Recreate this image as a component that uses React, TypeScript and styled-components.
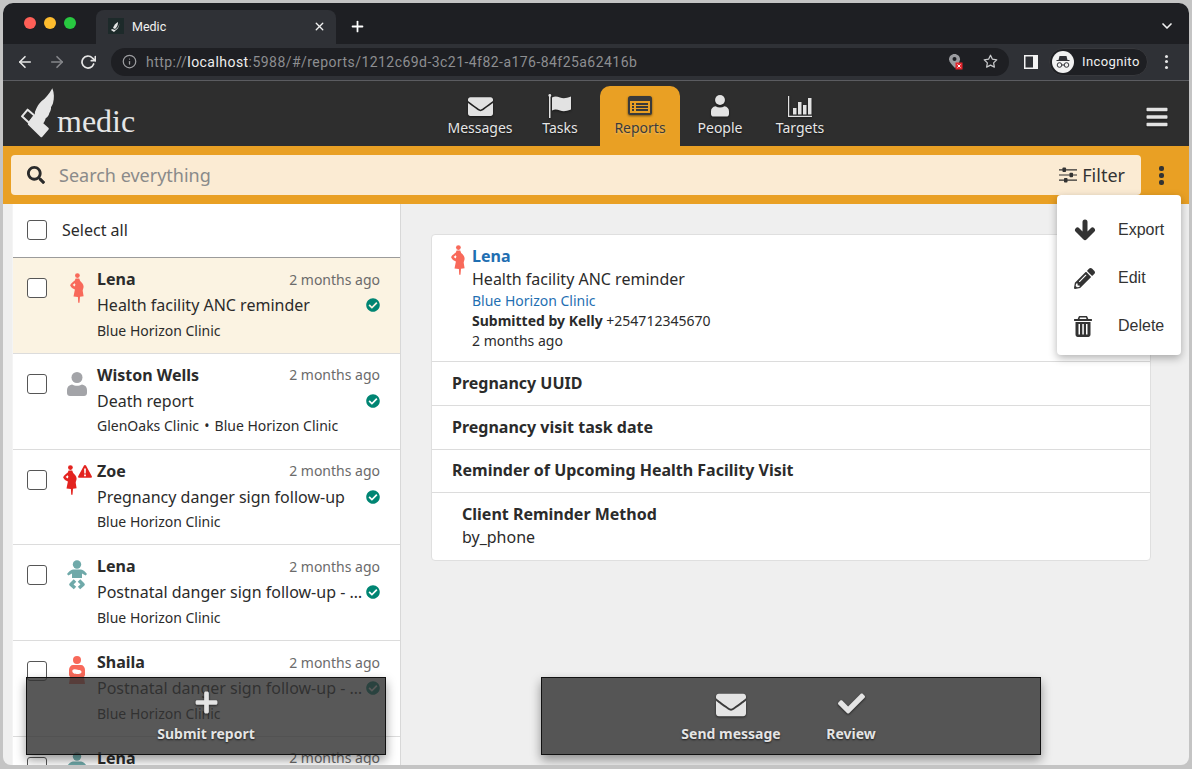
import React from 'react'
import styled, { createGlobalStyle } from 'styled-components'
import { FaBars, FaCheck, FaCheckCircle, FaEnvelope, FaPencilAlt, FaPlus, FaSearch } from 'react-icons/fa'
import { FiArrowLeft, FiArrowRight, FiChevronDown, FiInfo, FiPlus, FiRotateCw, FiStar, FiX } from 'react-icons/fi'

const GlobalStyle = createGlobalStyle`
  html, body {
    margin: 0;
    padding: 0;
    height: 100%;
    overflow: hidden;
    background: #c4c4c4;
  }
  * { box-sizing: border-box; }
`

const Screen = styled.div`
  width: 1192px;
  height: 769px;
  padding: 3px 3px 4px 3px;
  font-family: 'Noto Sans', sans-serif;
  color: #2b2b2b;
`

const Win = styled.div`
  position: relative;
  width: 100%;
  height: 100%;
  display: flex;
  flex-direction: column;
  overflow: hidden;
  border-radius: 10px 10px 8px 8px;
  background: #efefef;
`

/* browser chrome */
const TabStrip = styled.div`
  height: 41px;
  flex: none;
  display: flex;
  align-items: flex-end;
  background: #1e1f23;
  padding-left: 21px;
  color: #f1f1f1;
`

const Lights = styled.div`
  display: flex;
  gap: 8px;
  align-self: center;
  margin: 0 20px 1px 0;
`

const Light = styled.span<{ $c: string }>`
  width: 12px;
  height: 12px;
  border-radius: 50%;
  background: ${(p) => p.$c};
`

const ChromeTab = styled.div`
  width: 240px;
  height: 34px;
  padding: 0 10px 2px 12px;
  display: flex;
  align-items: center;
  gap: 8px;
  background: #2f3136;
  border-radius: 8px 8px 0 0;
  font: 12.5px Roboto, sans-serif;
`

const Favicon = styled.span`
  width: 16px;
  height: 16px;
  display: flex;
  align-items: center;
  justify-content: center;
  background: #1d2a2a;
`

const TabTitle = styled.span`
  flex: 1;
`

const StripEnd = styled.div`
  flex: 1;
  height: 34px;
  display: flex;
  align-items: center;
  justify-content: space-between;
  padding: 0 14px 2px 13px;
`

const ChromeBar = styled.div`
  height: 37px;
  flex: none;
  display: flex;
  align-items: center;
  padding: 0 0 1px 13px;
  background: #2f3136;
  border-bottom: 1px solid #5b5c60;
  color: #e6e6e6;
`

const NavArrows = styled.div`
  display: flex;
  align-items: center;
  gap: 14px;
  width: 95px;
`

const Address = styled.div`
  width: 898px;
  height: 28px;
  display: flex;
  align-items: center;
  padding: 0 11px;
  border-radius: 14px;
  background: #1e1f23;
  font: 14px Roboto, sans-serif;
  letter-spacing: 0.45px;
  color: #8d8e91;
`

const Url = styled.span`
  flex: 1;
  margin-left: 9px;
  b {
    font-weight: 400;
    color: #eeeeee;
  }
`

const Blocked = styled.span`
  width: 34px;
  display: flex;
`

const SidePanelWrap = styled.span`
  margin-left: 15px;
  display: flex;
`

const Incognito = styled.div`
  width: 99px;
  height: 28px;
  margin-left: 11px;
  display: flex;
  align-items: center;
  gap: 8px;
  padding-left: 2px;
  border-radius: 14px;
  background: #1e1f23;
  border: 1px solid #37383c;
  font: 13px Roboto, sans-serif;
  letter-spacing: 0.4px;
  color: #f0f0f0;
`

const ToolbarEnd = styled.span`
  margin-left: 17px;
  display: flex;
`

const Kebab = styled.span<{ $size: number; $color: string; $gap: number; $round?: boolean }>`
  display: flex;
  flex-direction: column;
  align-items: center;
  gap: ${(p) => p.$gap}px;
  i {
    width: ${(p) => p.$size}px;
    height: ${(p) => p.$size}px;
    border-radius: ${(p) => (p.$round ? '50%' : '2px')};
    background: ${(p) => p.$color};
  }
`

/* app header */
const Header = styled.header`
  height: 65px;
  flex: none;
  display: flex;
  background: #2e2e2e;
  color: #e2e2e2;
`

const Logo = styled.div`
  width: 437px;
  display: flex;
  align-items: flex-end;
  padding: 0 0 7px 12px;
`

const LogoText = styled.span`
  font: 400 32px 'Liberation Serif', serif;
  line-height: 32px;
  margin: 0 0 2px 2px;
  color: #e6e6e6;
`

const NavTabs = styled.nav`
  display: flex;
  flex: 1;
  align-items: flex-end;
`

const NavTab = styled.div<{ $active?: boolean }>`
  width: 80px;
  height: 60px;
  display: flex;
  flex-direction: column;
  align-items: center;
  justify-content: flex-end;
  padding-bottom: 8px;
  font-size: 14px;
  line-height: 20px;
  border-radius: 10px 10px 0 0;
  text-shadow: 0 1px 2px rgba(0, 0, 0, 0.6);
  background: ${(p) => (p.$active ? '#e9a024' : 'transparent')};
  color: ${(p) => (p.$active ? '#3a3a3a' : '#e6e6e6')};
  ${(p) => p.$active && 'text-shadow: 0 1px 2px rgba(255, 255, 255, 0.35);'}
`

const NavIcon = styled.span`
  height: 24px;
  display: flex;
  align-items: center;
  filter: drop-shadow(0 1px 1px rgba(0, 0, 0, 0.5));
`

const Burger = styled.div`
  width: 65px;
  display: flex;
  align-items: center;
  justify-content: center;
  padding-top: 6px;
  filter: drop-shadow(0 1px 1px rgba(0, 0, 0, 0.5));
`

/* search */
const SearchBand = styled.div`
  height: 58px;
  flex: none;
  display: flex;
  align-items: center;
  padding: 0 0 0 8px;
  background: #e9a024;
`

const SearchBox = styled.div`
  width: 1130px;
  height: 40px;
  display: flex;
  align-items: center;
  padding: 0 16px;
  border-radius: 4px;
  background: #fbebd3;
  font-size: 18px;
`

const Placeholder = styled.span`
  flex: 1;
  margin-left: 14px;
  color: #8a8a8a;
`

const FilterLabel = styled.span`
  margin-left: 5px;
  color: #333333;
`

const BandMenu = styled.div`
  flex: 1;
  display: flex;
  justify-content: center;
  padding-right: 8px;
`

/* body */
const Main = styled.main`
  flex: 1;
  min-height: 0;
  display: flex;
  padding-left: 9px;
`

const ListPane = styled.section`
  width: 389px;
  flex: none;
  overflow: hidden;
  background: #ffffff;
  border-right: 1px solid #d8d8d8;
  border-left: 1px solid #f4f4f4;
`

const SelectAll = styled.div`
  height: 54px;
  display: flex;
  align-items: center;
  gap: 15px;
  padding: 0 0 2px 14px;
  font-size: 16px;
  border-bottom: 1px solid #9b9b9b;
`

const Box = styled.span`
  display: block;
  width: 20px;
  height: 20px;
  flex: none;
  border: 1px solid #565656;
  border-radius: 3px;
  background: #ffffff;
`

const Item = styled.article<{ $selected?: boolean }>`
  height: 95.8px;
  display: flex;
  padding: 8px 20px 0 14px;
  border-bottom: 1px solid #dcdcdc;
  background: ${(p) => (p.$selected ? '#fbf3e2' : '#ffffff')};
`

const ItemBox = styled.div`
  padding-top: 12px;
  width: 20px;
  flex: none;
`

const ItemIcon = styled.div<{ $top: number }>`
  width: 50px;
  flex: none;
  display: flex;
  align-items: flex-start;
  justify-content: center;
  gap: 1px;
  padding: ${(p) => p.$top}px 0 0 10px;
`

const ItemBody = styled.div`
  flex: 1;
  min-width: 0;
`

const ItemLine = styled.div`
  height: 26px;
  display: flex;
  align-items: center;
  justify-content: space-between;
  svg {
    flex: none;
  }
`

const Name = styled.span`
  font-size: 16px;
  font-weight: 700;
`

const When = styled.span`
  font-size: 14px;
  color: #6b6b6b;
`

const Subject = styled.span`
  font-size: 16px;
  max-width: 268px;
  white-space: nowrap;
  overflow: hidden;
  text-overflow: ellipsis;
`

const Place = styled.span`
  font-size: 14px;
  padding-bottom: 2px;
`

const Dot = styled.span`
  margin: 0 1.5px;
`

const DetailPane = styled.section`
  flex: 1;
  padding: 30px 38px 0 30px;
`

const Card = styled.div`
  background: #ffffff;
  border: 1px solid #dfdfdf;
  border-radius: 4px;
`

const CardHead = styled.div`
  height: 127px;
  display: flex;
  padding: 10px 19px;
  border-bottom: 1px solid #dcdcdc;
`

const HeadIcon = styled.div`
  width: 21px;
  flex: none;
`

const HeadLine = styled.div<{ $size: number; $h: number; $blue?: boolean; $bold?: boolean }>`
  font-size: ${(p) => p.$size}px;
  line-height: ${(p) => p.$h}px;
  font-weight: ${(p) => (p.$bold ? 700 : 400)};
  color: ${(p) => (p.$blue ? '#1f6fb2' : '#2b2b2b')};
  strong {
    font-weight: 700;
  }
`

const Field = styled.div<{ $nested?: boolean; $tight?: boolean; $h: number }>`
  height: ${(p) => p.$h}px;
  padding: ${(p) => (p.$nested ? '9px 30px 11px' : p.$tight ? '0 20px 2px' : '0 20px')};
  display: flex;
  flex-direction: column;
  justify-content: center;
  font-size: 16px;
  line-height: 23px;
  border-bottom: ${(p) => (p.$nested ? 'none' : '1px solid #dcdcdc')};
  b {
    font-weight: 700;
  }
`

/* overlays */
const Menu = styled.div`
  position: absolute;
  top: 192px;
  left: 1054px;
  width: 124px;
  height: 160px;
  padding: 11px 0 9px;
  background: #ffffff;
  border-radius: 4px;
  box-shadow: 0 3px 8px rgba(0, 0, 0, 0.3);
`

const MenuRow = styled.div`
  height: 48px;
  display: flex;
  align-items: center;
  padding-left: 17px;
  font: 16px 'Liberation Sans', sans-serif;
  color: #333333;
`

const MenuGlyph = styled.span`
  width: 44px;
  display: flex;
  color: #333333;
`

const ActionBar = styled.div<{ $left: number; $width: number }>`
  position: absolute;
  top: 674px;
  left: ${(p) => p.$left}px;
  width: ${(p) => p.$width}px;
  height: 78px;
  display: flex;
  justify-content: center;
  background: rgba(51, 51, 51, 0.82);
  border: 1px solid #111111;
  box-shadow: 0 5px 10px rgba(0, 0, 0, 0.4);
`

const Action = styled.div`
  width: 120px;
  display: flex;
  flex-direction: column;
  align-items: center;
  padding-top: 12px;
  color: #e4e4e4;
  font-size: 14px;
  font-weight: 700;
  line-height: 20px;
  text-shadow: 0 1px 2px rgba(0, 0, 0, 0.7);
`

const ActionIcon = styled.span`
  height: 34px;
  display: flex;
  align-items: flex-start;
  filter: drop-shadow(0 1px 1px rgba(0, 0, 0, 0.6));
`

const Wing = () => (
  <svg width="40" height="54" viewBox="0 0 120 162" fill="#e6e6e6" aria-hidden="true">
    <path d="M112 10c6 15 6 30 2 45-2 5-4 10-6 11 1 6-2 14-5 18-1 6-5 12-11 16-2 8-6 16-12 20L58 98l2-18c6-15 12-25 20-32 10-6 22-20 32-38z" />
    <path d="M57 90l43 38c2 2 2 4 0 6l-18 21c-2 2-4 2-6 0L40 120c-2-2-2-4 0-6l11-17z" />
    <path d="M38 74l21 18-17 21-21-19z" fill="none" stroke="#e6e6e6" strokeWidth="6" strokeLinejoin="round" />
  </svg>
)

const Pregnant = ({ color }: { color: string }) => (
  <svg width="14" height="30" viewBox="0 0 14 30" fill={color} aria-hidden="true">
    <circle cx="7.4" cy="2.6" r="2.4" />
    <path d="M5.6 5.600h3.600l1 2.400c1.600 1.400 3.400 3.200 3.400 5.600 0 2-.9 2.900-.9 4.200l.9 5.400-3.600.6-.5 6H8.200l-.3-5.800-4.400-.6 1.400-6.800-2.900-1.600C.8 13.600.2 12.800.2 12.200.6 10.400 3.200 8.600 4.800 7.400zm-.9 4.600L2.600 12l2.200 1.400.6-2z" />
  </svg>
)

const Baby = () => (
  <svg width="20" height="30" viewBox="0 0 20 30" fill="#6fa9a9" aria-hidden="true">
    <circle cx="10" cy="4.500" r="4.200" />
    <path d="M6 9.500h8c2 0 4.500 2.500 6 4.500l-1.400 1.500L15 13.500V18H5v-4.500l-3.600 2L0 14c1.500-2 4-4.500 6-4.500z" />
    <path d="M8 20.500l-4 4 4 3.500M12 20.500l4 4-4 3.500" fill="none" stroke="#6fa9a9" strokeWidth="3.6" strokeLinejoin="round" />
  </svg>
)

const Mother = () => (
  <svg width="16" height="28" viewBox="0 0 16 28" aria-hidden="true">
    <circle cx="8" cy="4" r="4" fill="#f8695a" />
    <path d="M4 9h8c2 0 4 2 4 5v5l-1 2 1 7H0l1-7-1-2v-5c0-3 2-5 4-5z" fill="#f8695a" />
    <path d="M3.500 14c2-1.500 4 0 6 0 1.500 0 3 .5 3 2s-2 2-4 2c-2.500 0-6-.5-5-4z" fill="#ffffff" />
  </svg>
)

const ListAlt = () => (
  <svg width="24" height="20" viewBox="0 0 24 20" aria-hidden="true">
    <rect width="24" height="19" rx="2.5" fill="#3a3a3a" />
    <rect x="2" y="5" width="20" height="12" fill="#e9a024" />
    <path d="M4 7h2v2H4zM8 7h12v2H8zM4 10h2v2H4zM8 10h12v2H8zM4 13h2v2H4zM8 13h12v2H8z" fill="#3a3a3a" />
  </svg>
)

const FlagIcon = () => (
  <svg width="24" height="24" viewBox="0 0 24 24" fill="#e2e2e2" aria-hidden="true">
    <path d="M1 1h1.500v23H1z" />
    <circle cx="1.8" cy="1.5" r="1.4" />
    <path d="M4 3.500c3-1.500 5-1 8 0 3 1 6 1 11-1v13c-5 2-8 2-11 1s-5-1.500-8 0z" />
  </svg>
)

const ChartIcon = () => (
  <svg width="24" height="21" viewBox="0 0 24 21" fill="#e2e2e2" aria-hidden="true">
    <path d="M0 0h1.200v19.800H24V21H0z" />
    <path d="M5 12h3.500v6.500H5zM10 6h3.500v12.500H10zM15 9h3.500v9.500H15zM20 2h3.500v16.500H20z" />
  </svg>
)

const Person = ({ color, size }: { color: string; size: number }) => (
  <svg width={size} height={(size * 24) / 20} viewBox="0 0 20 24" fill={color} aria-hidden="true">
    <circle cx="10" cy="5.5" r="5.5" />
    <path d="M5 12.500c3 1.800 7 1.800 10 0 3 .5 5 2.500 5 5.500v3c0 1.700-1.300 3-3 3H3c-1.700 0-3-1.300-3-3v-3c0-3 2-5 5-5.500z" />
  </svg>
)

const Warning = () => (
  <svg width="14" height="13" viewBox="0 0 14 13" aria-hidden="true">
    <path d="M7 0c.5 0 .8.2 1 .6l5.800 10.600c.4.700-.1 1.600-1 1.600H1.200c-.9 0-1.400-.9-1-1.600L6 .6C6.200.2 6.500 0 7 0z" fill="#e3231f" />
    <path d="M6.100 3.500h1.800l-.2 5H6.300zM6.100 9.500h1.800v1.700H6.100z" fill="#ffffff" />
  </svg>
)

const Sliders = () => (
  <svg width="18" height="16" viewBox="0 0 18 16" fill="#333333" aria-hidden="true">
    <path d="M0 2.300h18v1.200H0zM0 7.400h18v1.200H0zM0 12.500h18v1.200H0z" />
    <rect x="3.5" y="0.5" width="3.5" height="4.5" rx="0.8" />
    <rect x="10.5" y="5.8" width="3.5" height="4.5" rx="0.8" />
    <rect x="5" y="11" width="3.5" height="4.5" rx="0.8" />
  </svg>
)

const ArrowDown = () => (
  <svg width="22" height="22" viewBox="0 0 22 22" fill="none" stroke="#333333" strokeWidth="5" strokeLinecap="round" strokeLinejoin="round" aria-hidden="true">
    <path d="M11 3v15M3.500 11l7.500 7.500 7.500-7.500" />
  </svg>
)

const TrashCan = () => (
  <svg width="18" height="21" viewBox="0 0 18 21" fill="#333333" aria-hidden="true">
    <path d="M6 0h6c.8 0 1.400.5 1.600 1.200L14.300 3H17.500c.3 0 .5.200.5.500v1c0 .3-.2.500-.5.500H.5C.2 5 0 4.800 0 4.500v-1C0 3.200.2 3 .5 3h3.200l.7-1.800C4.600.5 5.200 0 6 0zm-.5 3h7l-.5-1.400H6z" />
    <path
      fillRule="evenodd"
      d="M1.500 6h15v12.500c0 1.400-1 2.500-2.200 2.500H3.700c-1.200 0-2.200-1.100-2.200-2.500zM4.500 8v10.500H6V8zM8.300 8v10.500h1.500V8zM12 8v10.500h1.500V8z"
    />
  </svg>
)

const IncognitoMark = () => (
  <svg width="22" height="22" viewBox="0 0 22 22" aria-hidden="true">
    <circle cx="11" cy="11" r="11" fill="#f1f1f1" />
    <path d="M7.500 5h7l1 4h2v1H4.500V9h2z" fill="#303136" />
    <circle cx="7.5" cy="14" r="2.3" fill="none" stroke="#303136" />
    <circle cx="14.5" cy="14" r="2.3" fill="none" stroke="#303136" />
    <path d="M9.800 14h2.400" stroke="#303136" />
  </svg>
)

const SidePanel = () => (
  <svg width="14" height="14" viewBox="0 0 14 14" aria-hidden="true">
    <rect width="14" height="14" fill="#f4f4f4" />
    <rect x="1.5" y="1.5" width="7.5" height="11" fill="#2f3136" />
  </svg>
)

const BlockedPin = () => (
  <svg width="14" height="16" viewBox="0 0 14 16" aria-hidden="true">
    <path d="M5.500 0C8.500 0 11 2.300 11 5.200 11 8 8 12 6 14 3 11 0 8 0 5.200 0 2.300 2.500 0 5.500 0z" fill="#9b9ca0" />
    <circle cx="5.5" cy="5" r="2" fill="#1e1f23" />
    <rect x="6.5" y="8.5" width="7" height="7" fill="#e3262e" />
    <path d="M8.500 10.500l3 3m0-3l-3 3" stroke="#ffffff" />
  </svg>
)

type Report = {
  name: string
  subject: string
  place: React.ReactNode
  icon: React.ReactNode
  iconTop?: number
  selected?: boolean
}

const clinic = 'Blue Horizon Clinic'

const reports: Array<Report> = [
  {
    name: 'Lena',
    subject: 'Health facility ANC reminder',
    place: clinic,
    icon: <Pregnant color="#f8695a" />,
    selected: true,
  },
  {
    name: 'Wiston Wells',
    subject: 'Death report',
    place: (
      <>
        GlenOaks Clinic <Dot>•</Dot> {clinic}
      </>
    ),
    icon: <Person color="#a3a4a8" size={20} />,
    iconTop: 10,
  },
  {
    name: 'Zoe',
    subject: 'Pregnancy danger sign follow-up',
    place: clinic,
    icon: (
      <>
        <Pregnant color="#e3231f" />
        <Warning />
      </>
    ),
  },
  {
    name: 'Lena',
    subject: 'Postnatal danger sign follow-up - newborn',
    place: clinic,
    icon: <Baby />,
  },
  {
    name: 'Shaila',
    subject: 'Postnatal danger sign follow-up - mother',
    place: clinic,
    icon: <Mother />,
  },
  {
    name: 'Lena',
    subject: 'Postnatal danger sign follow-up - newborn',
    place: clinic,
    icon: <Baby />,
  },
]

const App: React.FC = () => {
  return (
    <Screen>
      <GlobalStyle />
      <Win>
        <TabStrip>
          <Lights>
            <Light $c="#ff5f57" />
            <Light $c="#febc2e" />
            <Light $c="#28c840" />
          </Lights>
          <ChromeTab>
            <Favicon>
              <svg width="10" height="12" viewBox="0 0 10 12" fill="#e6e6e6" aria-hidden="true">
                <path d="M8 0c1 3 0 7-3 9l-1 1-3-1-1 1 3 2 2-2c3-2 4-6 3-10z" />
                <path d="M7 2C5 3 3 5 2 8l2 1c2-2 3-4 3-7z" />
              </svg>
            </Favicon>
            <TabTitle>Medic</TabTitle>
            <FiX size={13} strokeWidth={2.5} />
          </ChromeTab>
          <StripEnd>
            <FiPlus size={17} strokeWidth={2.5} color="#ffffff" />
            <FiChevronDown size={16} strokeWidth={2.5} />
          </StripEnd>
        </TabStrip>
        <ChromeBar>
          <NavArrows>
            <FiArrowLeft size={18} strokeWidth={2.2} />
            <FiArrowRight size={18} strokeWidth={2.2} color="#85868a" />
            <FiRotateCw size={16} strokeWidth={2.6} />
          </NavArrows>
          <Address>
            <FiInfo size={15} strokeWidth={2} color="#9c9da0" />
            <Url>
              http://<b>localhost</b>:5988/#/reports/1212c69d-3c21-4f82-a176-84f25a62416b
            </Url>
            <Blocked>
              <BlockedPin />
            </Blocked>
            <FiStar size={15} strokeWidth={2} color="#c8c9cb" />
          </Address>
          <SidePanelWrap>
            <SidePanel />
          </SidePanelWrap>
          <Incognito>
            <IncognitoMark />
            Incognito
          </Incognito>
          <ToolbarEnd>
            <Kebab $size={3} $color="#e6e6e6" $gap={2.5} $round>
              <i />
              <i />
              <i />
            </Kebab>
          </ToolbarEnd>
        </ChromeBar>
        <Header>
          <Logo>
            <Wing />
            <LogoText>medic</LogoText>
          </Logo>
          <NavTabs>
            <NavTab>
              <NavIcon>
                <FaEnvelope size={25} color="#e2e2e2" />
              </NavIcon>
              Messages
            </NavTab>
            <NavTab>
              <NavIcon>
                <FlagIcon />
              </NavIcon>
              Tasks
            </NavTab>
            <NavTab $active>
              <NavIcon>
                <ListAlt />
              </NavIcon>
              Reports
            </NavTab>
            <NavTab>
              <NavIcon>
                <Person color="#e2e2e2" size={18} />
              </NavIcon>
              People
            </NavTab>
            <NavTab>
              <NavIcon>
                <ChartIcon />
              </NavIcon>
              Targets
            </NavTab>
          </NavTabs>
          <Burger>
            <FaBars size={24} color="#e2e2e2" />
          </Burger>
        </Header>
        <SearchBand>
          <SearchBox>
            <FaSearch size={18} color="#2b2b2b" />
            <Placeholder>Search everything</Placeholder>
            <Sliders />
            <FilterLabel>Filter</FilterLabel>
          </SearchBox>
          <BandMenu>
            <Kebab $size={5} $color="#333333" $gap={2}>
              <i />
              <i />
              <i />
            </Kebab>
          </BandMenu>
        </SearchBand>
        <Main>
          <ListPane>
            <SelectAll>
              <Box />
              Select all
            </SelectAll>
            {reports.map((r, i) => (
              <Item key={i} $selected={r.selected}>
                <ItemBox>
                  <Box />
                </ItemBox>
                <ItemIcon $top={r.iconTop ?? 7}>{r.icon}</ItemIcon>
                <ItemBody>
                  <ItemLine>
                    <Name>{r.name}</Name>
                    <When>2 months ago</When>
                  </ItemLine>
                  <ItemLine>
                    <Subject>{r.subject}</Subject>
                    <FaCheckCircle size={14} color="#008573" />
                  </ItemLine>
                  <ItemLine>
                    <Place>{r.place}</Place>
                  </ItemLine>
                </ItemBody>
              </Item>
            ))}
          </ListPane>
          <DetailPane>
            <Card>
              <CardHead>
                <HeadIcon>
                  <Pregnant color="#f8695a" />
                </HeadIcon>
                <div>
                  <HeadLine $size={16} $h={23} $blue $bold>
                    Lena
                  </HeadLine>
                  <HeadLine $size={16} $h={23}>
                    Health facility ANC reminder
                  </HeadLine>
                  <HeadLine $size={14} $h={20} $blue>
                    {clinic}
                  </HeadLine>
                  <HeadLine $size={14} $h={20}>
                    <strong>Submitted by Kelly</strong> +254712345670
                  </HeadLine>
                  <HeadLine $size={14} $h={20}>
                    2 months ago
                  </HeadLine>
                </div>
              </CardHead>
              <Field $h={44}>
                <b>Pregnancy UUID</b>
              </Field>
              <Field $h={44}>
                <b>Pregnancy visit task date</b>
              </Field>
              <Field $h={43} $tight>
                <b>Reminder of Upcoming Health Facility Visit</b>
              </Field>
              <Field $h={67} $nested>
                <b>Client Reminder Method</b>
                by_phone
              </Field>
            </Card>
          </DetailPane>
        </Main>
        <Menu>
          <MenuRow>
            <MenuGlyph>
              <ArrowDown />
            </MenuGlyph>
            Export
          </MenuRow>
          <MenuRow>
            <MenuGlyph>
              <FaPencilAlt size={21} />
            </MenuGlyph>
            Edit
          </MenuRow>
          <MenuRow>
            <MenuGlyph>
              <TrashCan />
            </MenuGlyph>
            Delete
          </MenuRow>
        </Menu>
        <ActionBar $left={23} $width={360}>
          <Action>
            <ActionIcon>
              <FaPlus size={25} />
            </ActionIcon>
            Submit report
          </Action>
        </ActionBar>
        <ActionBar $left={538} $width={500}>
          <Action>
            <ActionIcon>
              <FaEnvelope size={30} />
            </ActionIcon>
            Send message
          </Action>
          <Action>
            <ActionIcon>
              <FaCheck size={27} />
            </ActionIcon>
            Review
          </Action>
        </ActionBar>
      </Win>
    </Screen>
  )
}

export default App
